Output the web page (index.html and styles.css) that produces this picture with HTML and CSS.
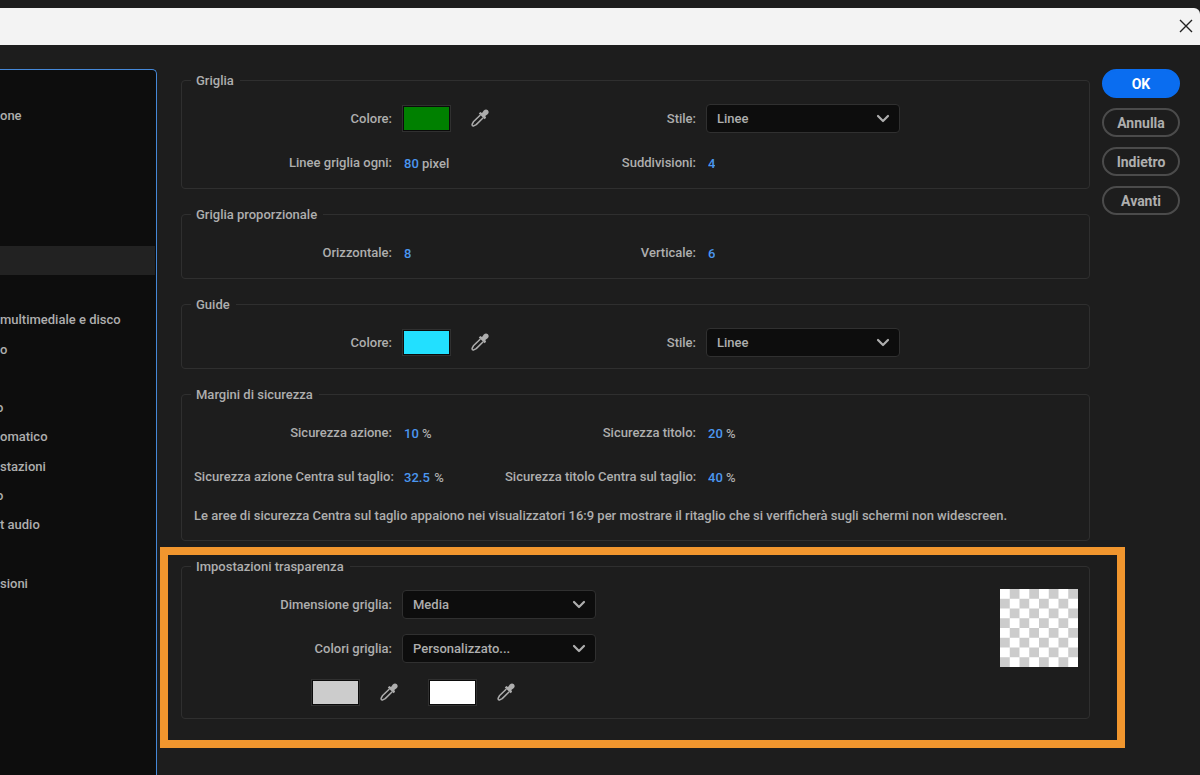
FILE: index.html
```html
<!DOCTYPE html>
<html lang="it">
<head>
<meta charset="utf-8">
<title>Preferenze</title>
<link rel="stylesheet" href="styles.css">
</head>
<body>
<svg class="defs" aria-hidden="true">
  <symbol id="dropper" viewBox="0 0 18 18">
    <path d="M9.4 6 2.4 12.8 1.1 15.4Q.9 17.2 2.7 16.9L5.2 15.6 12.2 8.8" fill="none" stroke="currentColor" stroke-width="1.5" stroke-linejoin="round"/>
    <path d="M7.8 4.4 9.3 3 11 3.9 12.8 1.6Q14.9-.4 16.9 1.3 18.6 3.4 16.6 5.3L14.3 7.1 15.1 8.8 13.7 10.2Z" fill="currentColor"/>
  </symbol>
  <symbol id="chevron" viewBox="0 0 14 9">
    <path d="M2 2 7 7 12 2" fill="none" stroke="currentColor" stroke-width="2.2" stroke-linecap="round" stroke-linejoin="round"/>
  </symbol>
</svg>
<div class="dialog">
  <header class="titlebar">
    <button class="close" aria-label="Chiudi"><svg viewBox="0 0 14 14" width="14" height="14"><path d="M1 1 13 13M13 1 1 13" fill="none" stroke="#222" stroke-width="1.4"/></svg></button>
  </header>
  <div class="content">
    <nav class="sidebar">
      <ul class="categories">
        <li>one</li><li></li><li></li><li></li>
        <li></li><li class="selected"></li><li></li><li>multimediale e disco</li>
        <li>o</li><li></li><li class="cut">o</li><li>omatico</li>
        <li>stazioni</li><li class="cut">o</li><li>t audio</li><li></li>
        <li>sioni</li>
      </ul>
    </nav>
    <main class="panels">
      <fieldset class="panel">
        <legend>Griglia</legend>
        <div class="fields">
          <span class="label">Colore:</span>
          <div class="pick">
            <button class="swatch green" aria-label="Colore griglia"></button>
            <button class="dropper" aria-label="Contagocce griglia"><svg><use href="#dropper"/></svg></button>
          </div>
          <label class="label" for="grid-style">Stile:</label>
          <div class="dropdown"><select id="grid-style"><option>Linee</option></select><svg class="chevron"><use href="#chevron"/></svg></div>
          <label class="label" for="every">Linee griglia ogni:</label>
          <div class="value"><input id="every" value="80" style="width:2ch"> pixel</div>
          <label class="label" for="sub">Suddivisioni:</label>
          <div class="value"><input id="sub" value="4" style="width:1ch"></div>
        </div>
      </fieldset>
      <fieldset class="panel">
        <legend>Griglia proporzionale</legend>
        <div class="fields">
          <label class="label" for="hor">Orizzontale:</label>
          <div class="value"><input id="hor" value="8" style="width:1ch"></div>
          <label class="label" for="ver">Verticale:</label>
          <div class="value"><input id="ver" value="6" style="width:1ch"></div>
        </div>
      </fieldset>
      <fieldset class="panel">
        <legend>Guide</legend>
        <div class="fields">
          <span class="label">Colore:</span>
          <div class="pick">
            <button class="swatch cyan" aria-label="Colore guide"></button>
            <button class="dropper" aria-label="Contagocce guide"><svg><use href="#dropper"/></svg></button>
          </div>
          <label class="label" for="guide-style">Stile:</label>
          <div class="dropdown"><select id="guide-style"><option>Linee</option></select><svg class="chevron"><use href="#chevron"/></svg></div>
        </div>
      </fieldset>
      <fieldset class="panel">
        <legend>Margini di sicurezza</legend>
        <div class="fields">
          <label class="label" for="act">Sicurezza azione:</label>
          <div class="value"><input id="act" value="10" style="width:2ch"> %</div>
          <label class="label" for="tit">Sicurezza titolo:</label>
          <div class="value"><input id="tit" value="20" style="width:2ch"> %</div>
          <label class="label" for="act-c">Sicurezza azione Centra sul taglio:</label>
          <div class="value"><input id="act-c" class="decimal" value="32.5"> %</div>
          <label class="label" for="tit-c">Sicurezza titolo Centra sul taglio:</label>
          <div class="value"><input id="tit-c" value="40" style="width:2ch"> %</div>
        </div>
        <p class="note">Le aree di sicurezza Centra sul taglio appaiono nei visualizzatori 16:9 per mostrare il ritaglio che si verificherà sugli schermi non widescreen.</p>
      </fieldset>
      <div class="highlighted">
        <fieldset class="panel">
          <legend>Impostazioni trasparenza</legend>
          <div class="transparency">
            <div class="settings">
              <div class="fields pair">
                <label class="label" for="size">Dimensione griglia:</label>
                <div class="dropdown"><select id="size"><option>Media</option></select><svg class="chevron"><use href="#chevron"/></svg></div>
                <label class="label" for="colors">Colori griglia:</label>
                <div class="dropdown"><select id="colors"><option>Personalizzato...</option></select><svg class="chevron"><use href="#chevron"/></svg></div>
              </div>
              <div class="custom">
                <div class="pick">
                  <button class="swatch grey" aria-label="Primo colore"></button>
                  <button class="dropper" aria-label="Contagocce primo colore"><svg><use href="#dropper"/></svg></button>
                </div>
                <div class="pick">
                  <button class="swatch white" aria-label="Secondo colore"></button>
                  <button class="dropper" aria-label="Contagocce secondo colore"><svg><use href="#dropper"/></svg></button>
                </div>
              </div>
            </div>
            <div class="preview" role="img" aria-label="Anteprima"></div>
          </div>
        </fieldset>
      </div>
    </main>
    <div class="actions">
      <button class="action primary">OK</button>
      <button class="action">Annulla</button>
      <button class="action">Indietro</button>
      <button class="action">Avanti</button>
    </div>
  </div>
</div>
</body>
</html>
```
FILE: styles.css
```css
* { box-sizing: border-box; }
body {
  margin: 0;
  background: #1d1d1d;
  color: #aeaeae;
  font: 500 13px/22px Roboto, "Noto Sans", sans-serif;
}
button, input, select { font: inherit; color: inherit; }
button { padding: 0; border: 0; background: none; }
.defs { position: absolute; width: 0; height: 0; }
.dialog {
  display: flex;
  flex-direction: column;
  height: 100vh;
  padding-top: 8px;
  overflow: hidden;
}
.titlebar {
  display: flex;
  flex: none;
  align-items: center;
  justify-content: flex-end;
  height: 37px;
  padding: 0 7px 2px 0;
  background: #f3f3f3;
  border-radius: 0 6px 0 0;
}
.close { display: flex; }
.content { display: flex; flex: 1; min-height: 0; padding: 24px 20px 0 0; }
.sidebar {
  flex: none;
  width: 157px;
  padding: 30px 1px 0 0;
  overflow: hidden;
  background: #0d0d0d;
  border: solid #4588d8;
  border-width: 1px 1px 0 0;
  border-radius: 0 5px 0 0;
}
.categories { margin: 0; padding: 0; list-style: none; }
.categories li { height: 29px; line-height: 32px; white-space: nowrap; }
.categories li:nth-child(4n) { margin-bottom: 1px; }
.categories .selected { background: #222; }
.categories .cut { margin-left: -4px; }
.panels {
  display: flex;
  flex: 1;
  flex-direction: column;
  gap: 15px;
  min-width: 0;
  padding: 1px 12px 0 24px;
}
.panel {
  min-width: 0;
  margin: 0;
  padding: 13px 11px 11px 12px;
  border: 1px solid #2f2f2f;
  border-radius: 4px;
}
.panel legend { height: 20px; margin-left: -3px; padding: 0 6px 0 5px; }
.fields {
  display: grid;
  grid-template-columns: 198px 93px 191px 194px;
  grid-auto-rows: 30px;
  gap: 14px 10px;
  align-items: center;
}
.fields.pair { grid-template-columns: 198px 194px; }
.label { padding-top: 1px; text-align: right; white-space: nowrap; }
.value { padding: 3px 0 0 2px; white-space: pre; }
.value input {
  height: 20px;
  padding: 0;
  border: 0;
  background: none;
  color: #4b97f0;
}
.value .decimal { width: 27px; }
.note { margin: 14px 0 2px; white-space: nowrap; }
.pick { display: flex; gap: 20px; align-items: center; }
.swatch {
  flex: none;
  width: 49px;
  height: 27px;
  padding: 1px;
  border: 1px solid #303030;
  box-shadow: inset 0 0 0 1px #0b0b0b;
  background-clip: content-box;
}
.green { background-color: #008000; }
.cyan { background-color: #22e0ff; }
.grey { background-color: #ccc; }
.white { background-color: #fff; }
.dropper { display: flex; flex: none; }
.dropper svg { width: 18px; height: 18px; }
.dropdown { display: grid; align-items: center; }
.dropdown > * { grid-area: 1 / 1; }
.dropdown select {
  width: 100%;
  height: 29px;
  padding: 1px 30px 0 10px;
  border: 1px solid #303030;
  border-radius: 4px;
  background: #0d0d0d;
  appearance: none;
}
.chevron { justify-self: end; width: 14px; height: 9px; margin-right: 10px; pointer-events: none; }
.highlighted { position: relative; }
.highlighted::after {
  content: "";
  position: absolute;
  inset: -9px -35px -29px -21px;
  border: 8px solid #f1962e;
  pointer-events: none;
}
.transparency { display: flex; justify-content: space-between; }
.custom { display: flex; gap: 30px; height: 30px; margin-top: 14px; padding-left: 117px; }
.preview {
  width: 78px;
  height: 78px;
  background: repeating-conic-gradient(#ccc 0 25%, #fff 0 50%) 0 0 / 25% 25%;
}
.actions { display: flex; flex: none; flex-direction: column; gap: 10px; width: 78px; }
.action {
  height: 29px;
  border: 2px solid #4b4b4b;
  border-radius: 15px;
  font-weight: 700;
  font-size: 14px;
}
.primary { border-color: #0a6df0; background: #0a6df0; color: #fff; }
```
